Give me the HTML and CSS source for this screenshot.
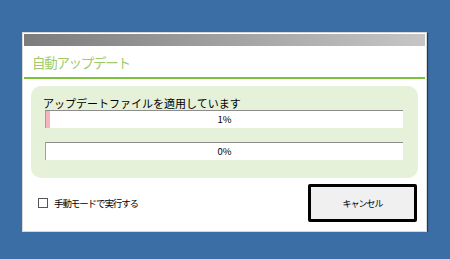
FILE: index.html
```html
<!DOCTYPE html>
<html lang="ja">
<head>
    <meta charset="UTF-8">
    <title>自動アップデート</title>
    <link rel="stylesheet" href="styles.css">
</head>
<body>
    <div class="dialog">
        <div class="titlebar"></div>
        <div class="header">自動アップデート</div>

        <div class="panel">
            <div class="status-label">アップデートファイルを適用しています</div>
            <div class="progress">
                <div class="progress-fill" style="width: 1%;"></div>
                <span class="progress-text">1%</span>
            </div>
            <div class="progress second">
                <div class="progress-fill" style="width: 0%;"></div>
                <span class="progress-text">0%</span>
            </div>
        </div>

        <div class="footer">
            <label class="manual">
                <span class="checkbox"></span>
                手動モードで実行する
            </label>
            <button class="cancel-btn">キャンセル</button>
        </div>
    </div>
</body>
</html>
```

FILE: styles.css
```css
body {
    margin: 0;
    background-color: #3a6ea5;
    font-family: "Noto Sans CJK JP", "Noto Sans", sans-serif;
}

.dialog {
    width: 405px;
    height: 200px;
    margin: 32px 0 0 22px;
    box-sizing: border-box;
    background-color: #fff;
    border: 1px solid #d8d8d8;
    padding: 1px;
    box-shadow: 1px 1px 1px rgba(0, 0, 0, 0.45);
}

.titlebar {
    height: 12px;
    background: linear-gradient(to right, #7c7c7c, #c6c6c6);
}

.header {
    height: 31px;
    line-height: 32px;
    padding-left: 8px;
    font-size: 13.5px;
    letter-spacing: -1.3px;
    color: #9fcb6a;
    border-bottom: 2px solid #7cc33a;
}

.panel {
    margin: 7px 7px 0 7px;
    height: 92px;
    box-sizing: border-box;
    padding: 10px 15px 0 14px;
    background-color: #e5f1d9;
    border-radius: 10px;
}

.status-label {
    font-size: 11px;
    line-height: 14px;
    margin-left: -2px;
    color: #000;
}

.progress {
    position: relative;
    height: 18px;
    box-sizing: border-box;
    background-color: #fff;
    border-top: 1px solid #8c8c8c;
    border-left: 1px solid #a0a0a0;
}

.progress.second {
    margin-top: 14px;
}

.progress-fill {
    height: 100%;
    background-color: #f5b3c0;
}

.progress-text {
    position: absolute;
    top: 0;
    left: 0;
    right: 0;
    text-align: center;
    font-size: 9.5px;
    line-height: 17px;
    color: #000;
}

.footer {
    display: flex;
    align-items: center;
    justify-content: space-between;
    padding: 6px 8px 0 14px;
}

.manual {
    display: flex;
    align-items: center;
    gap: 6px;
    font-size: 9.5px;
    letter-spacing: -1.1px;
    color: #000;
}

.checkbox {
    width: 8px;
    height: 8px;
    border: 1px solid #555;
    background-color: #fff;
}

.cancel-btn {
    width: 109px;
    height: 38px;
    background-color: #f0f0f0;
    border: 3px solid #000;
    border-radius: 2px;
    font-family: inherit;
    font-size: 9px;
    letter-spacing: -1px;
    color: #000;
}
```
